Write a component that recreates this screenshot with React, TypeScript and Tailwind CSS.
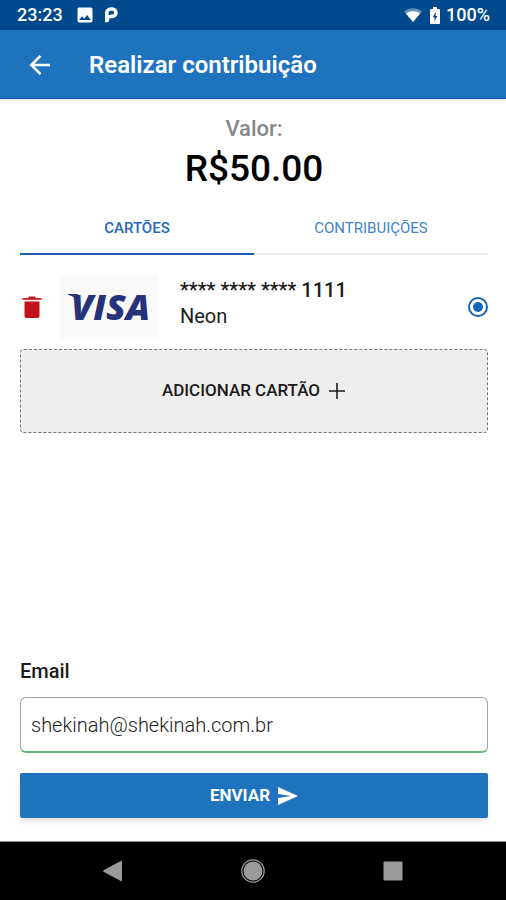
import { useState } from "react";

function StatusBar() {
  return (
    <div className="flex h-[30px] items-center justify-between bg-[#00498c] pr-4 pl-[17px] text-lg leading-6 font-medium text-white">
      <div className="flex items-center">
        <span>23:23</span>
        <svg className="ml-3 size-5" viewBox="0 0 24 24" fill="currentColor" aria-hidden="true">
          <path d="M21 19V5c0-1.100-.9-2-2-2H5c-1.100 0-2 .9-2 2v14c0 1.100.9 2 2 2h14c1.100 0 2-.9 2-2zM8.500 13.500l2.500 3.010L14.500 12l4.500 6H5l3.500-4.500z" />
        </svg>
        <svg className="ml-2 size-4" viewBox="0 0 16 16" fill="none" aria-hidden="true">
          <path d="M3.800 9.500V6a4 4 0 0 1 4-4h1.400a3.700 3.700 0 0 1 0 7.400H7.500" stroke="currentColor" strokeWidth="3.600" />
          <path d="M2 8h6v3.200H6.300v1.300a2.800 2.800 0 0 1-2.800 2.800H2z" fill="currentColor" />
        </svg>
      </div>
      <div className="flex items-center">
        <svg className="size-[18px]" viewBox="0 0 18 18" aria-hidden="true">
          <path d="M0 5.500C5 1 13 1 18 5.500L9 16z" fill="#fff" fillOpacity="0.4" />
          <path d="M2 7.500c4-3 10-3 14 0L9 16z" fill="#fff" />
        </svg>
        <svg className="mr-1.5 ml-2 h-[17px] w-2.5" viewBox="0 0 10 17" aria-hidden="true">
          <path d="M3 0h4v2h2a1 1 0 0 1 1 1v13a1 1 0 0 1-1 1H1a1 1 0 0 1-1-1V3a1 1 0 0 1 1-1h2z" fill="#fff" />
          <path d="M5.600 5L2.800 10.200h1.700V14l2.900-5H5.600z" fill="#00498c" />
        </svg>
        <span>100%</span>
      </div>
    </div>
  );
}

function AppBar() {
  return (
    <header className="flex h-[69px] items-center border-b border-[#0f5aa8] bg-[#1f73be] px-7 pt-0.5 text-white shadow">
      <button type="button" aria-label="Voltar" className="mr-[37px]">
        <svg className="size-6" viewBox="0 0 24 24" fill="none" stroke="currentColor" strokeWidth="2.600" aria-hidden="true">
          <path d="M22 12H4M12.500 2.800L3.300 12l9.200 9.200" />
        </svg>
      </button>
      <h1 className="text-2xl font-semibold">Realizar contribuição</h1>
    </header>
  );
}

function VisaLogo() {
  return (
    <div className="relative flex h-16 w-[98px] items-center justify-end bg-[#fafafa] pr-2 font-['Open_Sans',sans-serif] text-4xl font-extrabold text-[#26337a] italic">
      VISA
      <svg className="absolute top-[19px] left-2 h-3 w-4" viewBox="0 0 16 12" aria-hidden="true">
        <path d="M0 .8V0h10l2 11C10 6 6 2.500 0 .8z" fill="currentColor" />
      </svg>
    </div>
  );
}

export default function App() {
  const [tab, setTab] = useState("cartoes");
  const [email, setEmail] = useState("shekinah@shekinah.com.br");
  const tabBase = "h-[54px] flex-1 border-b-2 pt-0.5 text-[15px]";
  const tabActive = "border-[#1c60b0] font-medium text-[#2469b8]";
  const tabIdle = "border-[#ececec] font-normal text-[#4583c8]";

  return (
    <div className="flex min-h-screen flex-col bg-white font-[Roboto,sans-serif] text-[#1c1c1c]">
      <StatusBar />
      <AppBar />

      <main className="flex flex-1 flex-col pt-4 pr-[18px] pb-[23px] pl-5">
        <div className="text-center">
          <p className="text-[22px] leading-7 font-medium text-[#858a89]">Valor:</p>
          <p className="text-[37px] leading-[52px] font-medium text-black">R$50.00</p>
        </div>

        <div role="tablist" className="mt-1.5 flex">
          <button
            type="button"
            role="tab"
            aria-selected={tab === "cartoes"}
            onClick={() => setTab("cartoes")}
            className={`${tabBase} ${tab === "cartoes" ? tabActive : tabIdle}`}
          >
            CARTÕES
          </button>
          <button
            type="button"
            role="tab"
            aria-selected={tab === "contribuicoes"}
            onClick={() => setTab("contribuicoes")}
            className={`${tabBase} ${tab === "contribuicoes" ? tabActive : tabIdle}`}
          >
            CONTRIBUIÇÕES
          </button>
        </div>

        <div className="mt-5 flex items-center">
          <button type="button" aria-label="Remover cartão" className="mr-4 text-[#bd1218]">
            <svg className="size-6" viewBox="0 0 24 24" fill="currentColor" aria-hidden="true">
              <path d="M4.500 6.500h15V21a2 2 0 0 1-2 2h-11a2 2 0 0 1-2-2zM2.500 3h5.700l1-1.500h5.600l1 1.500h5.700v1.800h-19z" />
            </svg>
          </button>
          <label htmlFor="card-1111" className="flex flex-1 items-center">
            <VisaLogo />
            <span className="ml-[22px] flex flex-col pb-2 text-xl leading-[26px]">
              <span className="font-medium">**** **** **** 1111</span>
              <span>Neon</span>
            </span>
          </label>
          <input
            id="card-1111"
            type="radio"
            name="card"
            defaultChecked
            className="grid size-5 appearance-none place-content-center rounded-full border-2 border-[#1565b8] before:size-2.5 before:rounded-full checked:before:bg-[#1565b8]"
          />
        </div>

        <button
          type="button"
          className="mt-2.5 flex h-[84px] items-center justify-center gap-2 rounded border border-dashed border-[#777] bg-[#eee] text-[17px] font-medium"
        >
          ADICIONAR CARTÃO
          <svg className="size-[18px]" viewBox="0 0 18 18" stroke="currentColor" strokeWidth="1.600" aria-hidden="true">
            <path d="M9 1v16M1 9h16" />
          </svg>
        </button>

        <form className="mt-auto flex flex-col" onSubmit={(e) => e.preventDefault()}>
          <label htmlFor="email" className="text-xl leading-7 font-medium">
            Email
          </label>
          <input
            id="email"
            type="email"
            value={email}
            onChange={(e) => setEmail(e.target.value)}
            className="mt-3 h-14 rounded-md border border-b-2 border-[#a0a0a0] border-b-[#5fb878] px-2.5 text-xl font-light outline-none"
          />
          <button
            type="submit"
            className="mt-5 flex h-[45px] items-center justify-center gap-2 rounded-xs bg-[#1f73be] text-[17px] font-bold text-white shadow-md"
          >
            ENVIAR
            <svg className="size-5" viewBox="0 0 20 20" fill="currentColor" aria-hidden="true">
              <path d="M0 1l20 9L0 19v-7l13-2L0 8z" />
            </svg>
          </button>
        </form>
      </main>

      <nav className="flex h-[59px] items-center justify-center gap-[116px] border-t border-[#888] bg-black text-[#9b9b9b]">
        <button type="button" aria-label="Voltar">
          <svg className="size-6" viewBox="0 0 24 24" fill="currentColor" aria-hidden="true">
            <path d="M2.500 11.300L20.300 1.800q.7 0 .7.700v19q0 .7-.7.700L2.500 12.700q-.6-.7 0-1.400z" />
          </svg>
        </button>
        <button type="button" aria-label="Início">
          <svg className="size-6" viewBox="0 0 24 24" aria-hidden="true">
            <circle cx="12" cy="12" r="9.500" fill="currentColor" />
            <circle cx="12" cy="12" r="11.200" fill="none" stroke="currentColor" strokeWidth="1.200" />
          </svg>
        </button>
        <button type="button" aria-label="Recentes">
          <svg className="size-6" viewBox="0 0 24 24" fill="currentColor" aria-hidden="true">
            <rect x="2.500" y="2.500" width="19" height="19" rx="1" />
          </svg>
        </button>
      </nav>
    </div>
  );
}
